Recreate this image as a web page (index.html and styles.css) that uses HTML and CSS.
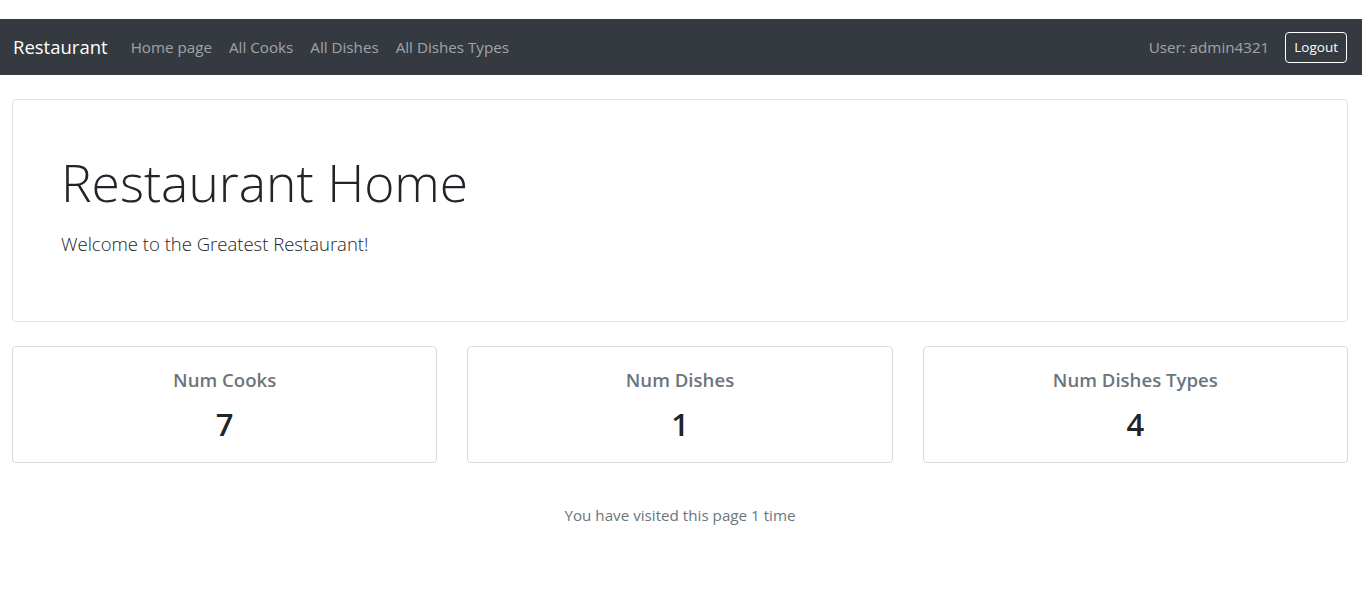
FILE: index.html
```html
<!DOCTYPE html>
<html lang="en">
<head>
<meta charset="utf-8">
<title>Restaurant</title>
<link rel="stylesheet" href="styles.css">
</head>
<body>
<nav class="navbar">
  <div class="nav-left">
    <a class="brand" href="#">Restaurant</a>
    <a class="nav-link" href="#">Home page</a>
    <a class="nav-link" href="#">All Cooks</a>
    <a class="nav-link" href="#">All Dishes</a>
    <a class="nav-link" href="#">All Dishes Types</a>
  </div>
  <div class="nav-right">
    <span class="nav-text">User: admin4321</span>
    <a class="btn-logout" href="#">Logout</a>
  </div>
</nav>
<main class="content">
  <section class="jumbo">
    <h1 class="display">Restaurant Home</h1>
    <p class="lead">Welcome to the Greatest Restaurant!</p>
  </section>
  <div class="stats">
    <div class="stat-card">
      <h5 class="stat-title">Num Cooks</h5>
      <div class="stat-value">7</div>
    </div>
    <div class="stat-card">
      <h5 class="stat-title">Num Dishes</h5>
      <div class="stat-value">1</div>
    </div>
    <div class="stat-card">
      <h5 class="stat-title">Num Dishes Types</h5>
      <div class="stat-value">4</div>
    </div>
  </div>
  <p class="visits">You have visited this page 1 time</p>
</main>
</body>
</html>
```

FILE: styles.css
```css
* { box-sizing: border-box; }
body {
  margin: 0;
  padding-top: 19px;
  font-family: "Open Sans", "Noto Sans", sans-serif;
  font-size: 15.2px;
  line-height: 24px;
  color: #212529;
  background: #fff;
}
a { text-decoration: none; }
.navbar {
  height: 56px;
  background: #343a40;
  display: flex;
  align-items: center;
  justify-content: space-between;
  padding: 0 15px 0 13px;
}
.nav-left, .nav-right { display: flex; align-items: center; }
.brand {
  color: #fff;
  font-size: 18.5px;
  margin-right: 15px;
  line-height: 30px;
}
.nav-link {
  color: rgba(255,255,255,.55);
  padding: 8px;
}
.nav-link + .nav-link { margin-left: 1px; }
.nav-text {
  color: rgba(255,255,255,.55);
  margin-right: 16px;
}
.btn-logout {
  color: #fff;
  border: 1px solid #fff;
  border-radius: 4px;
  font-size: 13.5px;
  line-height: 21px;
  padding: 4px 8px;
  margin-top: 1px;
}
.content {
  padding: 24px 14px 0 12px;
}
.jumbo {
  border: 1px solid #dee2e6;
  border-radius: 4px;
  padding: 49px 48px 46px;
}
.display {
  font-size: 51.5px;
  font-weight: 300;
  line-height: 67px;
  margin: 0 0 13px;
}
.lead {
  font-size: 18.5px;
  font-weight: 300;
  line-height: 30px;
  margin: 0 0 16px;
}
.stats {
  display: grid;
  grid-template-columns: repeat(3, 1fr);
  gap: 30px;
  margin-top: 24px;
}
.stat-card {
  border: 1px solid rgba(0,0,0,.15);
  border-radius: 4px;
  padding: 21px 20px 19px;
  text-align: center;
}
.stat-title {
  font-size: 18.6px;
  font-weight: 600;
  line-height: 24px;
  color: #6c757d;
  margin: 0 0 13px;
}
.stat-value {
  font-size: 31px;
  font-weight: 600;
  line-height: 38px;
}
.visits {
  text-align: center;
  color: #6c757d;
  margin: 40px 0 0;
}
```
